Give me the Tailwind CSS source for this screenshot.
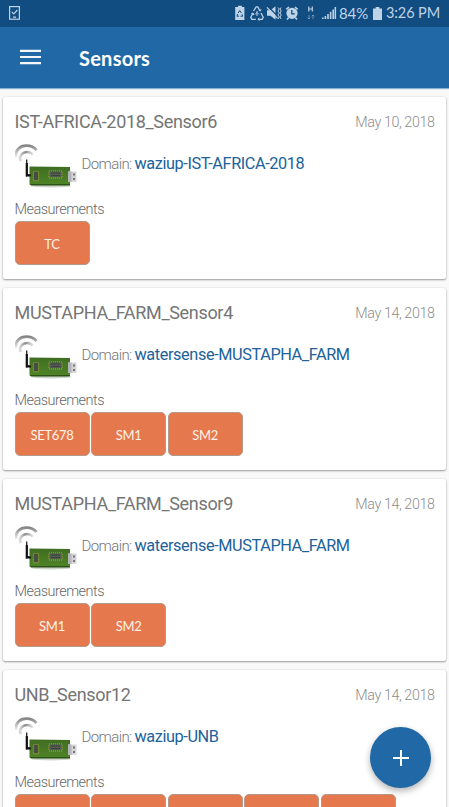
<!DOCTYPE html>
<html lang="en">
<head>
<meta charset="utf-8">
<title>Sensors</title>
<script src="https://cdn.jsdelivr.net/npm/@tailwindcss/browser@4"></script>
</head>
<body class="h-[807px] w-[449px] overflow-hidden bg-[#f9f9f9] font-['Roboto',sans-serif]">
<svg class="absolute size-0" aria-hidden="true">
  <defs>
    <linearGradient id="wave" x1="0" x2="0" y1="0" y2="1"><stop offset="0" stop-color="#858585"/><stop offset="1" stop-color="#eee"/></linearGradient>
    <linearGradient id="wave2" x1="0" x2="1" y1="0" y2="0"><stop offset="0" stop-color="#ddd"/><stop offset=".4" stop-color="#8a8a8a"/><stop offset="1" stop-color="#e8e8e8"/></linearGradient>
    <linearGradient id="pcb" x1="0" x2="0" y1="0" y2="1"><stop offset="0" stop-color="#3f6d22"/><stop offset="1" stop-color="#4f8426"/></linearGradient>
  </defs>
</svg>
<div class="flex h-[807px] flex-col overflow-hidden">
  <div class="flex h-[26.5px] shrink-0 items-center bg-[#124d82] pl-[9px] pr-[10px] text-[#bed3e6]">
    <svg class="h-[14px] w-[11px]" viewBox="0 0 11 14" fill="none" stroke="currentColor"><rect x=".6" y=".6" width="9.8" height="12.6" stroke-width="1.2"/><path d="M2.8 5.8 4.8 7.8 8.4 4M4 11.2h3" stroke-width="1.2"/></svg>
    <svg class="ml-auto h-[16px] w-[104px]" viewBox="0 0 104 16" fill="currentColor">
      <path d="M3 2V.7h4V2h2.4v13H.2V2z"/><path d="m3.1 8 1.6-2.4L6.4 8M7 9.3l.7 1.9H5.5M4 11.2H1.900L2.800 9" fill="none" stroke="#124d82"/>
      <g fill="none" stroke="currentColor" stroke-width="1.3"><path d="m18.500 6 2.700-4.200h1.600L25 6M26 8l2.200 4.300-1 2h-4M20.800 14.300h-4l-1-2L18 8.200"/><path d="m23.800 4.800 1.400 1.300.8-2M24.500 12.700l-1.500 1.600 1.500 1.300M16.200 8.800l1.900-.8.6 2M22 6v5m-2-1.500 2-2 2 2" stroke-width="1"/></g>
      <path d="M32 5.200h3.500l5-4v13.600l-5-4H32z"/><path d="M33.500 2 44 12.500" stroke="#124d82" stroke-width="1.300"/><path d="m32 2.400 10.500 11" fill="none" stroke="currentColor" stroke-width="1.300"/><path d="m43 2.500 1.300 1.500-1.300 2 1.300 2-1.300 2 1.300 2-1.300 2M46 2.500l-1 1.500 1.200 2L45 8l1.200 2-1.200 2 1 2" fill="none" stroke="currentColor" stroke-width="1"/>
      <circle cx="57" cy="8.300" r="5.600"/><path d="M51.400 4.400 54 2M62.600 4.400 60 2M53.500 12.800 52 14.600M60.500 12.800l1.500 1.800" stroke="currentColor" stroke-width="1.600"/><path d="M56.800 5v3.800h3" fill="none" stroke="#124d82" stroke-width="1.300"/>
      <path d="M73.800 1.500v5M77.300 1.500v5M74 4h3" fill="none" stroke="currentColor" stroke-width="1.200"/><path d="M74 10v4m-1.200-1.300L74 14l1.200-1.300M78 14v-4m-1.200 1.300L78 10l1.200 1.300" fill="none" stroke="currentColor" stroke-width=".8" opacity=".6"/>
      <path d="M87 14v-1.600h1.600V14zM89.600 14v-3h1.600v3zM92.200 14V9h1.600v5zM94.800 14V6.700h1.600V14zM97.400 14V4.400h1.600V14zM99.600 14V2h1.500v12z"/>
    </svg>
    <span class="w-[30px] whitespace-nowrap font-['Lato',sans-serif] text-[15px]/[18px] tracking-[-.1px]">84%</span>
    <svg class="ml-[4px] h-[13.5px] w-[9px]" viewBox="0 0 9 13.5" fill="currentColor"><path d="M2.700 0h3.600v1.700H2.700zM0 1.600h9v11.900H0z"/></svg>
    <span class="ml-[4px] w-[53px] whitespace-nowrap font-['Lato',sans-serif] text-[14.5px]/[18px] tracking-[-.1px]">3:26 PM</span>
  </div>
  <header class="relative flex h-[61.5px] shrink-0 items-center bg-[#2069a6] pl-[20px] shadow-[0_1px_1px_#8ab0cf]">
    <svg class="h-[16px] w-[21px]" viewBox="0 0 21 16" fill="#f2f7fb"><path d="M0 .8h21V3H0zM0 6.900h21v2.200H0zM0 13h21v2.200H0z"/></svg>
    <h1 class="ml-[38px] pt-[1px] font-['Lato',sans-serif] text-[20px]/[24px] font-bold tracking-[.25px] text-white">Sensors</h1>
  </header>
  <main id="list" class="flex flex-col gap-[9px] px-[3px] pt-[9px]"></main>
</div>
<button class="absolute left-[370px] top-[727px] flex size-[61px] items-center justify-center rounded-full bg-[#2069a6] shadow-[0_3px_7px_rgba(0,0,0,.3)]" aria-label="Add sensor">
  <svg class="size-[16px]" viewBox="0 0 16 16" stroke="#fff" stroke-width="2"><path d="M8 0v16M0 8h16"/></svg>
</button>
<script>
const sensors = [
  ["IST-AFRICA-2018_Sensor6", "May 10, 2018", "waziup-IST-AFRICA-2018", ["TC"]],
  ["MUSTAPHA_FARM_Sensor4", "May 14, 2018", "watersense-MUSTAPHA_FARM", ["SET678", "SM1", "SM2"]],
  ["MUSTAPHA_FARM_Sensor9", "May 14, 2018", "watersense-MUSTAPHA_FARM", ["SM1", "SM2"]],
  ["UNB_Sensor12", "May 14, 2018", "waziup-UNB", ["", "", "", "", ""]],
];
const board = `<svg class="h-[46px] w-[62px] shrink-0" viewBox="0 0 62 46" fill="none">
  <path d="M1 14C0 7 5 2.600 11.500 2.600c4 0 7.500 1.500 10 4.500" stroke="url(#wave)" stroke-width="2.800"/>
  <path d="M5.500 18C3.500 12 8 9 12 9c2.500 0 4.500 1 6 2.700" stroke="url(#wave2)" stroke-width="2.600"/>
  <ellipse cx="36" cy="43" rx="20" ry="1.500" fill="#ccd3c7"/>
  <path d="M14.500 23.500 55 24v18H17c-1.500 0-2.500-.5-2.500-1.500z" fill="url(#pcb)"/><path d="M14.500 41H55v1.500H16z" fill="#2d5219"/>
  <path d="M11.700 16.500v17" stroke="#222" stroke-width="1.300"/><path d="M10.700 20h2.200v11l3 .5v2h-5.200z" fill="#111"/>
  <path d="M18.500 28.700h5v9h-5z" stroke="#8f9838" stroke-width="1.500" stroke-dasharray="1 1"/><path d="M19 29h4v8h-4z" fill="#484b46"/>
  <path d="M34 28h13v7H34z" stroke="#8f9b3c" stroke-width="1.500" stroke-dasharray="1 1"/><path d="M34.500 28.500h12v5.500h-12z" fill="#565b55"/><path d="M36 30h9M36 32.500h9" stroke="#34402d" stroke-width=".8"/>
  <path d="M53 28.500h8.500v10.300H53z" fill="#d4d4d6"/><path d="M53 28.500h3.500v10.300H53z" fill="#b5b5b9"/><path d="M58 30.500h2v2h-2zM58 35h2v2h-2z" fill="#77777b"/>
</svg>`;
document.getElementById("list").innerHTML = sensors.map(([name, date, domain, items]) => `
<section class="h-[182px] shrink-0 rounded-[2px] bg-white px-[11.5px] shadow-[0_1px_2px_rgba(0,0,0,.36),0_0_2px_rgba(0,0,0,.12)]">
  <div class="flex h-[46px] items-center justify-between pt-[3px]">
    <h2 class="text-[18px]/[22px] tracking-[-.32px] text-[#757575]">${name}</h2>
    <time class="text-[14.3px]/[18px] font-light tracking-[-.4px] text-[#8d8d8d]">${date}</time>
  </div>
  <div class="flex h-[46px] items-center whitespace-nowrap">${board}
    <span class="-mt-[5px] ml-[5px] w-[53px] text-[15px]/[20px] font-light tracking-[-.6px] text-[#757575]">Domain:</span>
    <span class="-mt-[5px] text-[16.3px]/[20px] tracking-[-.4px] text-[#20629a]">${domain}</span>
  </div>
  <div class="flex h-[32px] items-end pb-[2px] text-[14.5px]/[18px] font-light tracking-[-.52px] text-[#686868]">Measurements</div>
  <div class="flex gap-[1.6px]">${items.map(t => `<div class="flex h-[44px] w-[75px] shrink-0 items-center justify-center rounded-[5px] border border-[#b5998a] bg-[#e5784d] pt-[1px] font-['Lato',sans-serif] text-[13px]/[16px] tracking-[-.3px] text-[#fff3e9]">${t}</div>`).join("")}</div>
</section>`).join("");
</script>
</body>
</html>
